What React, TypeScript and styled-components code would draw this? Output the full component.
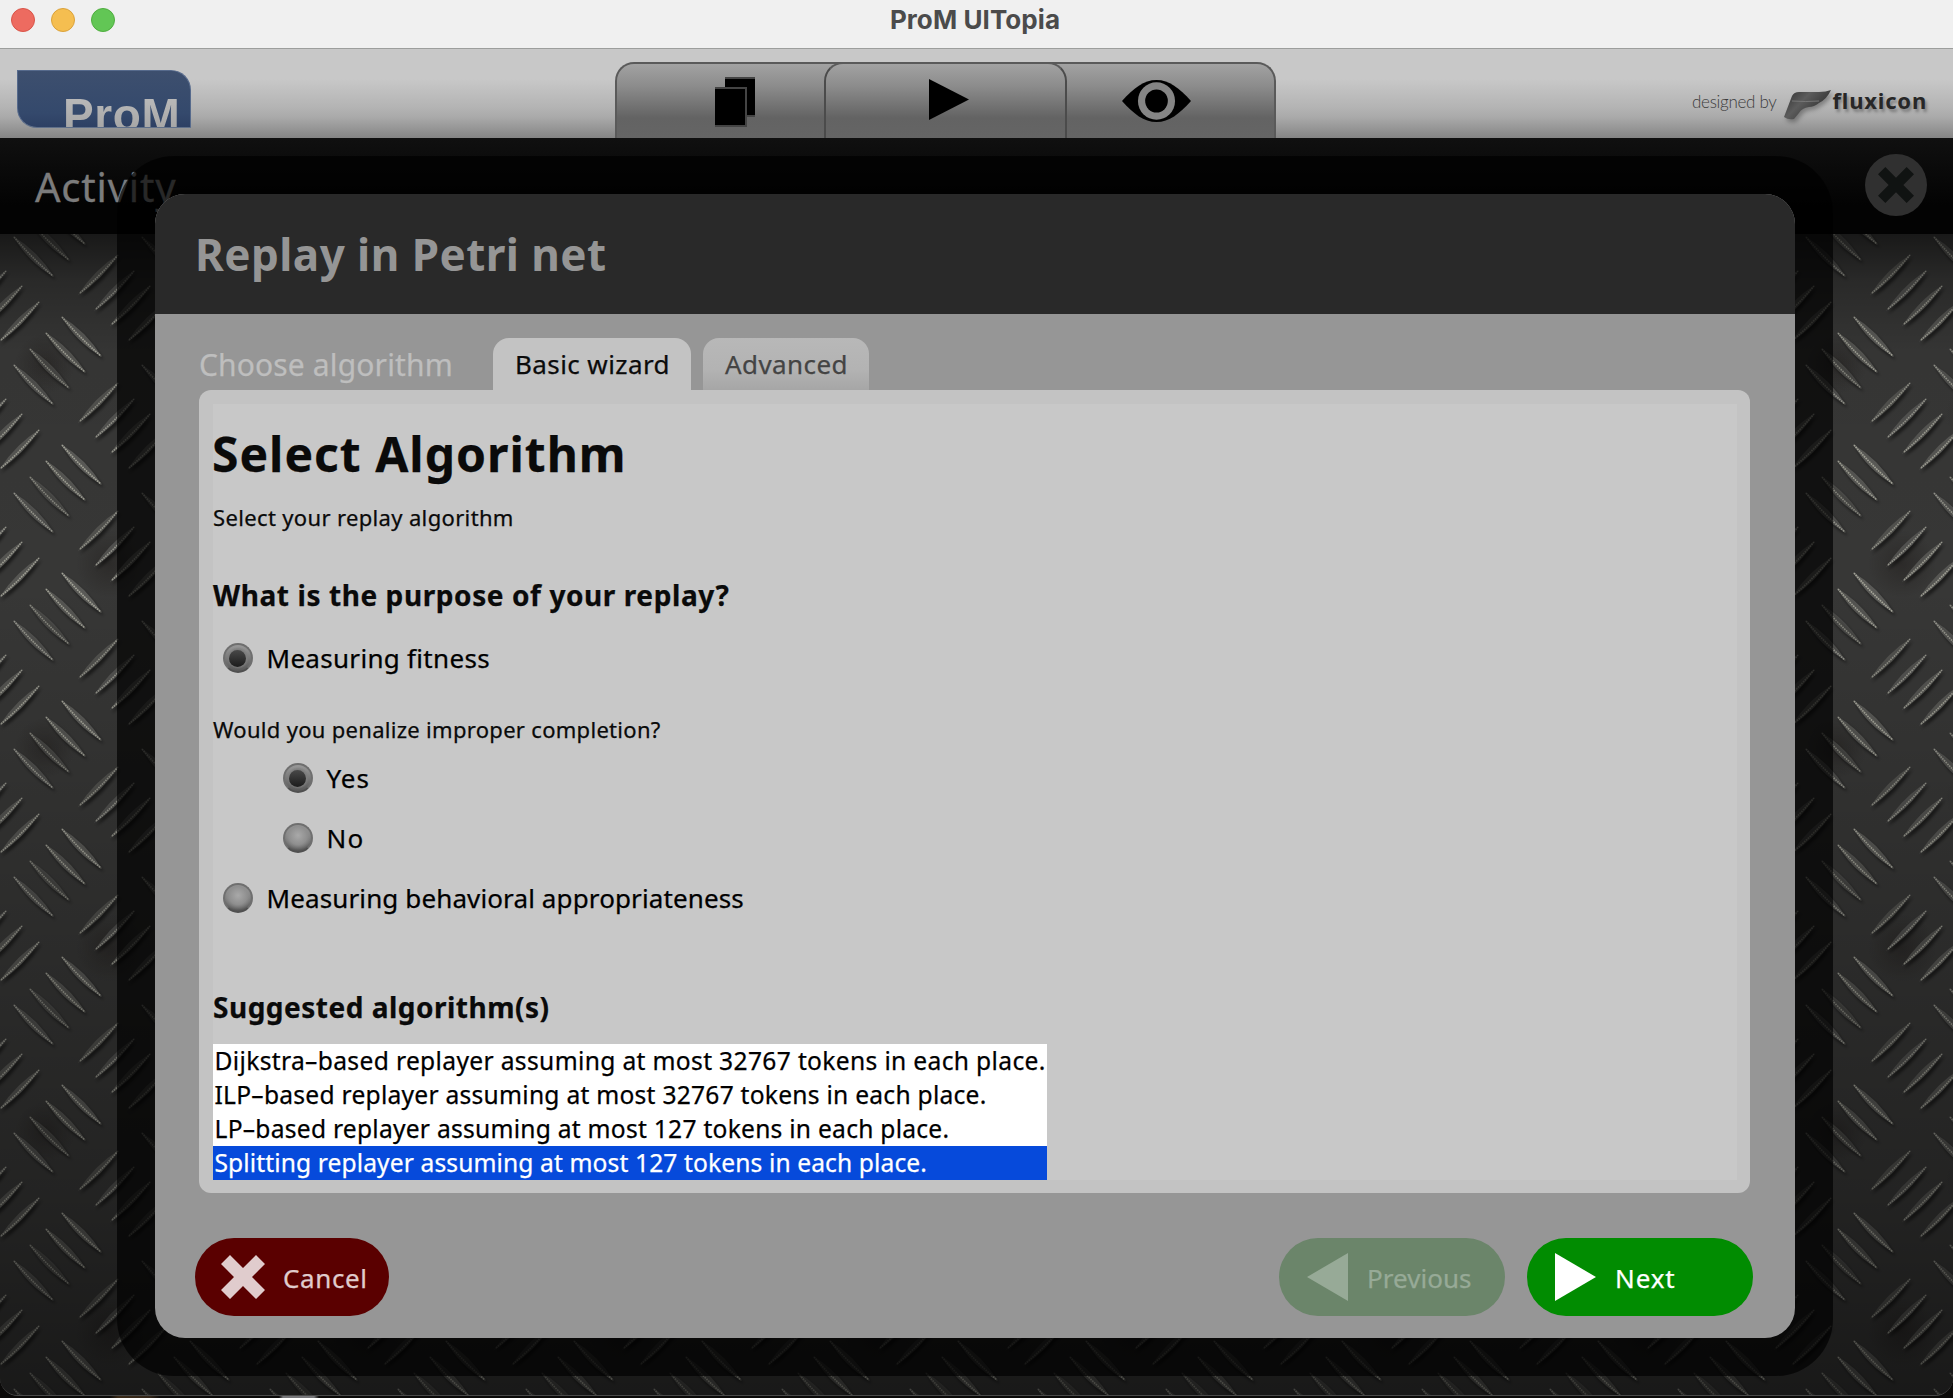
import React from "react";
import styled, { createGlobalStyle, css } from "styled-components";

const GlobalStyle = createGlobalStyle`
  * { box-sizing: border-box; }
  html, body { margin: 0; padding: 0; background: #0a0908; overflow: hidden; }
  body { font-family: "Noto Sans", "Open Sans", sans-serif; }
  h1, h2, p, ul { margin: 0; padding: 0; }
  button { font-family: inherit; }
`;

const Desktop = styled.div`
  width: 1953px;
  height: 1398px;
  overflow: hidden;
  background: linear-gradient(90deg, #0b0a09 110px, #3a2a18 118px, #33261a 150px, #0b0a09 160px, #0b0a09 279px, #77777a 283px, #77777a 314px, #0b0a09 319px);
`;

const Window = styled.div`
  position: relative;
  display: flex;
  flex-direction: column;
  height: 1396px;
  overflow: hidden;
  border-radius: 0 0 18px 18px;
  border-bottom: 1px solid #4a4a4a;
  background: #1b1b1b;
`;

const TitleBar = styled.header`
  display: grid;
  grid-template-columns: 1fr auto 1fr;
  align-items: center;
  flex: none;
  height: 49px;
  padding: 0 13px 9px 11px;
  background: #f0f0f0;
  border-bottom: 1px solid #9c9e9c;
`;

const Lights = styled.div`
  display: flex;
  gap: 16px;
`;

const Light = styled.span<{ $fill: string; $edge: string }>`
  width: 24px;
  height: 24px;
  border-radius: 50%;
  background: ${(p) => p.$fill};
  border: 1px solid ${(p) => p.$edge};
`;

const WindowTitle = styled.div`
  font: 700 26px/38px Inter, sans-serif;
  letter-spacing: 0.08px;
  color: #4b4b4b;
  margin-left: -1px;
`;

const Toolbar = styled.nav`
  display: grid;
  grid-template-columns: 615px 661px 1fr;
  flex: none;
  height: 89px;
  background: linear-gradient(#c8c8c8 0, #c8c8c8 30px, #b4b4b4 58px, #aaaaaa 68px, #959595 80px, #858585 100%);
`;

const Logo = styled.div`
  width: 174px;
  height: 58px;
  margin: 21px 0 0 17px;
  padding-left: 45px;
  overflow: hidden;
  border-radius: 0 20px 0 20px;
  border: 1px solid #566a8c;
  border-bottom-color: #60708a;
  background: linear-gradient(#3d4f6e, #34496c 75%, #2d4064);
  font: 700 46px/50px "Liberation Sans", Arial, sans-serif;
  letter-spacing: 0.6px;
`;

const LogoText = styled.div`
  margin-top: 19px;
  background: linear-gradient(#b8b8b8 10px, #a4a4a4 42px);
  background-clip: text;
  -webkit-background-clip: text;
  color: transparent;
`;

const ViewTabs = styled.div`
  display: grid;
  grid-template-columns: 207px 243px 1fr;
  height: 76px;
  margin-top: 13px;
  border: 2px solid #5a5a5a;
  border-bottom: 0;
  border-radius: 19px 19px 0 0;
  background: linear-gradient(#a2a2a2, #8c8c8c 22px, #636363 54px, #656565);
`;

const ViewTab = styled.button<{ $middle?: boolean }>`
  display: flex;
  align-items: flex-start;
  justify-content: center;
  padding: 0;
  border: 0;
  background: none;
  ${(p) =>
    p.$middle &&
    css`
      margin-top: -2px;
      border: 2px solid #4b4b4b;
      border-top-color: #5a5a5a;
      border-bottom: 0;
      border-radius: 19px 19px 0 0;
    `}
`;

const ViewGlyph = styled.span<{ $top: number; $before?: number; $after?: number }>`
  display: flex;
  margin-top: ${(p) => p.$top}px;
  margin-left: ${(p) => p.$before ?? 0}px;
  margin-right: ${(p) => p.$after ?? 0}px;
`;

const Credit = styled.div`
  display: flex;
  align-items: flex-start;
  justify-content: flex-end;
  padding: 35px 26px 0 0;
`;

const CreditText = styled.span`
  font: 300 17px/34px Lato, sans-serif;
  color: #3c3c3c;
  letter-spacing: -0.3px;
  margin: 1px 6px 0 0;
`;

const FluxMark = styled.svg`
  width: 50px;
  height: 36px;
  margin-top: 3px;
  filter: drop-shadow(2px 3px 2px rgba(0, 0, 0, 0.3));
`;

const FluxName = styled.span`
  font-weight: 700;
  font-size: 22px;
  line-height: 32px;
  letter-spacing: 0.8px;
  color: #272727;
  text-shadow: 2px 3px 3px rgba(0, 0, 0, 0.3);
`;

const ActivityBar = styled.div`
  display: flex;
  flex: none;
  align-items: center;
  justify-content: space-between;
  height: 96px;
  padding: 0 26px 0 35px;
  background: linear-gradient(#101010, #030303 70%);
`;

const ActivityTitle = styled.h1`
  padding-top: 2px;
  font-weight: 400;
  font-size: 40px;
  line-height: 94px;
  letter-spacing: 0.8px;
  color: #7c7c7c;
  -webkit-text-stroke: 0.3px;
`;

const CloseButton = styled.button`
  display: flex;
  align-items: center;
  justify-content: center;
  width: 62px;
  height: 62px;
  margin-top: -2px;
  padding: 0;
  border: 0;
  border-radius: 50%;
  background: #303030;
`;

const Workspace = styled.main`
  flex: 1;
  min-height: 0;
  background: #353534;
`;

const Plate = styled.svg`
  display: block;
  width: 1953px;
  height: 1164px;
`;

const ModalFrame = styled.div`
  position: absolute;
  top: 156px;
  left: 117px;
  display: flex;
  width: 1716px;
  height: 1220px;
  padding: 38px;
  border-radius: 57px;
  background: rgba(0, 0, 0, 0.68);
`;

const Dialog = styled.section`
  display: flex;
  flex: 1;
  flex-direction: column;
  overflow: hidden;
  border-radius: 30px;
  background: #969696;
`;

const DialogHeader = styled.header`
  flex: none;
  height: 120px;
  padding: 2px 0 0 40px;
  background: #292929;
`;

const DialogTitle = styled.h2`
  font-weight: 700;
  font-size: 44px;
  line-height: 116px;
  letter-spacing: 0.45px;
  color: #959595;
`;

const DialogBody = styled.div`
  display: flex;
  flex: 1;
  flex-direction: column;
  padding: 24px 45px 22px 44px;
  -webkit-text-stroke: 0.25px;
`;

const TabRow = styled.div`
  display: flex;
  height: 52px;
`;

const TabCaption = styled.div`
  width: 294px;
  padding-top: 1px;
  font-size: 30px;
  line-height: 52px;
  letter-spacing: 0.14px;
  color: #bebebe;
`;

const Tab = styled.button<{ $active?: boolean; $width: number }>`
  width: ${(p) => p.$width}px;
  margin-right: 12px;
  padding: 0 0 0 1px;
  border: 0;
  border-radius: 16px 16px 0 0;
  font-size: 26px;
  line-height: 52px;
  letter-spacing: 0.4px;
  -webkit-text-stroke: 0.25px;
  color: ${(p) => (p.$active ? "#0b0b0b" : "#444444")};
  background: ${(p) => (p.$active ? "#c3c3c3" : "linear-gradient(#b8b8b8, #b3b3b3 60%, #a6a6a6)")};
`;

const Panel = styled.div`
  height: 803px;
  padding: 14px 13px 13px 14px;
  border-radius: 12px;
  background: #c3c3c3;
`;

const PanelInner = styled.div`
  height: 776px;
  background: #c8c8c8;
  color: #0a0a0a;
`;

const Heading = styled.h1`
  padding-top: 2px;
  font-size: 48px;
  line-height: 96px;
  letter-spacing: 1px;
  margin-left: -1px;
`;

const SubHeading = styled.h2<{ $gap: number; $spacing: number }>`
  margin-top: ${(p) => p.$gap}px;
  font-size: 28px;
  line-height: 66px;
  letter-spacing: ${(p) => p.$spacing}px;
`;

const Note = styled.p<{ $gap?: number; $height: number; $spacing: number }>`
  margin-top: ${(p) => p.$gap ?? 0}px;
  font-size: 22px;
  line-height: ${(p) => p.$height}px;
  letter-spacing: ${(p) => p.$spacing}px;
`;

const RadioRow = styled.label<{ $nested?: boolean; $spacing: number }>`
  display: flex;
  align-items: center;
  gap: 14px;
  height: 60px;
  padding-left: ${(p) => (p.$nested ? 69.5 : 9.5)}px;
  font-size: 26px;
  line-height: 60px;
  letter-spacing: ${(p) => p.$spacing}px;
  color: #000;
`;

const RadioDot = styled.span<{ $on?: boolean }>`
  display: flex;
  align-items: center;
  justify-content: center;
  width: 30px;
  height: 30px;
  border-radius: 50%;
  border: 2px solid #6f6f6f;
  border-bottom-color: #505050;
  background: ${(p) =>
    p.$on
      ? "radial-gradient(circle at 50% 50%, #7d7d7d 45%, transparent 60%), linear-gradient(#999, #585858)"
      : "radial-gradient(circle at 50% 40%, #a9a9a9 0, #8f8f8f 45%, transparent 72%), linear-gradient(#9a9a9a, #555)"};

  &::after {
    content: "";
    display: ${(p) => (p.$on ? "block" : "none")};
    width: 17px;
    height: 17px;
    border-radius: 50%;
    background: linear-gradient(#484848, #1c1c1c);
  }
`;

const List = styled.ul`
  width: 834px;
  margin-top: 4px;
  list-style: none;
  background: #fff;
`;

const ListItem = styled.li<{ $selected?: boolean; $spacing: number }>`
  height: 34px;
  padding-left: 1.5px;
  white-space: nowrap;
  font-size: 24.6px;
  line-height: 34px;
  letter-spacing: ${(p) => p.$spacing}px;
  color: ${(p) => (p.$selected ? "#fff" : "#000")};
  background: ${(p) => (p.$selected ? "#064adb" : "transparent")};
`;

const Footer = styled.footer`
  display: flex;
  align-items: center;
  gap: 22px;
  margin: 45px -3px 0 -4px;
`;

const Spacer = styled.div`
  flex: 1;
`;

const tones = {
  cancel: css`
    width: 194px;
    padding-left: 26px;
    gap: 18px;
    letter-spacing: 0.6px;
    background: #5a0000;
    color: #e0cccd;
  `,
  previous: css`
    width: 226px;
    padding-left: 28px;
    gap: 19px;
    letter-spacing: 0.03px;
    background: #6b856a;
    color: #97aa97;
  `,
  next: css`
    width: 226px;
    padding-left: 28px;
    gap: 19px;
    letter-spacing: 0.9px;
    background: #018c01;
    color: #fff;
  `,
};

const PillButton = styled.button<{ $tone: keyof typeof tones }>`
  display: flex;
  align-items: center;
  height: 78px;
  padding: 0;
  border: 0;
  border-radius: 39px;
  font-size: 26px;
  line-height: 76px;
  -webkit-text-stroke: 0.25px;
  ${(p) => tones[p.$tone]}
`;

const PillLabel = styled.span`
  padding-top: 1px;
`;

const FolderIcon = () => (
  <svg width="44" height="52" viewBox="0 0 44 52">
    <path d="M12 2h30v38h-8V10H12z" />
    <path d="M12 0h30v2H12zM34 38h8v2h-8z" fill="#444" />
    <path d="M2 10h32v40H2z" fill="#444" />
    <path d="M2 12h30v36H2z" />
  </svg>
);

const PlayIcon = () => (
  <svg width="40" height="42" viewBox="0 0 40 42">
    <path d="M0 0L40 20.5L0 41z" />
  </svg>
);

const EyeIcon = () => (
  <svg width="69" height="42" viewBox="0 0 70 42" preserveAspectRatio="none">
    <path d="M0 21C12 8 22 0 35 0S58 8 70 21C58 34 48 42 35 42S12 34 0 21z" />
    <circle cx="35" cy="21" r="18.8" fill="#858585" />
    <circle cx="35" cy="21" r="11.5" />
  </svg>
);

const CrossIcon = ({ size, color }: { size: number; color: string }) => (
  <svg width={size} height={size} viewBox="0 0 44 44">
    <path
      d="M9 0L22 13L35 0L44 9L31 22L44 35L35 44L22 31L9 44L0 35L13 22L0 9z"
      fill={color}
    />
  </svg>
);

const Arrow = ({ left, color }: { left?: boolean; color: string }) => (
  <svg width="41" height="48" viewBox="0 0 41 48">
    <path d={left ? "M41 0L0 24L41 48z" : "M0 0L41 24L0 48z"} fill={color} />
  </svg>
);

const TILE = 128;

type Ridge = { x: number; y: number; up: boolean; tone: number };

const ridges: Ridge[] = [
  { x: 13, y: 2, up: false, tone: 0.8 },
  { x: 61, y: 82, up: false, tone: 1 },
  { x: 45, y: 98, up: false, tone: 0.9 },
  { x: 29, y: 114, up: false, tone: 0.65 },
  { x: 78, y: 61, up: true, tone: 0.75 },
  { x: 94, y: 77, up: true, tone: 0.8 },
  { x: 110, y: 92, up: true, tone: 0.85 },
  { x: 127, y: 108, up: true, tone: 0.9 },
];

const RidgeShape = ({ x, y, up, tone }: Ridge) => {
  const body = up ? "M0 0Q17 -26 41 -41Q24 -15 0 0z" : "M0 0Q25 15 41 41Q15 26 0 0z";
  const shine = up ? "M2 -2Q22 -19 40 -40" : "M1 1Q19 22 40 40";
  return (
    <g transform={`translate(${x} ${y})`}>
      <path d={body} fill="#000" opacity="0.5" transform="translate(2 3)" filter="url(#soft)" />
      <path d={body} fill="#5a5a57" opacity={tone} />
      <path d={shine} fill="none" stroke="#a8a89c" strokeWidth="1.7" strokeDasharray="1.6 0.9" opacity={tone * 0.95} />
    </g>
  );
};

const SteelPlate = () => (
  <Plate viewBox="0 0 1953 1164">
    <defs>
      <filter id="soft" x="-30%" y="-30%" width="160%" height="160%">
        <feGaussianBlur stdDeviation="1.5" />
      </filter>
      <radialGradient id="smudge">
        <stop offset="0" stopColor="#1c1816" stopOpacity="0.4" />
        <stop offset="1" stopColor="#1c1816" stopOpacity="0" />
      </radialGradient>
      <linearGradient id="fade" x1="0" y1="0" x2="0" y2="1">
        <stop offset="0" stopColor="#000" stopOpacity="0.55" />
        <stop offset="0.04" stopColor="#000" stopOpacity="0.25" />
        <stop offset="0.1" stopColor="#000" stopOpacity="0.04" />
        <stop offset="0.3" stopColor="#000" stopOpacity="0" />
        <stop offset="0.82" stopColor="#000" stopOpacity="0.36" />
        <stop offset="1" stopColor="#000" stopOpacity="0.55" />
      </linearGradient>
      <pattern id="tread" width={TILE} height={TILE} patternUnits="userSpaceOnUse">
        {[-TILE, 0, TILE].map((dx) =>
          [-TILE, 0, TILE].map((dy) => (
            <g key={`${dx},${dy}`} transform={`translate(${dx} ${dy})`}>
              {ridges.map((r) => (
                <RidgeShape key={`${r.x}-${r.y}`} {...r} />
              ))}
            </g>
          ))
        )}
      </pattern>
      <pattern id="wear" width="256" height="384" patternUnits="userSpaceOnUse">
        <circle cx="45" cy="130" r="30" fill="url(#smudge)" />
        <circle cx="190" cy="180" r="36" fill="url(#smudge)" />
        <circle cx="110" cy="330" r="34" fill="url(#smudge)" />
      </pattern>
    </defs>
    <rect width="1953" height="1164" fill="#373736" />
    <rect width="1953" height="1164" fill="url(#wear)" />
    <rect width="1953" height="1164" fill="url(#tread)" />
    <rect width="1953" height="1164" fill="url(#fade)" />
  </Plate>
);

const algorithms = [
  { label: "Dijkstra–based replayer assuming at most 32767 tokens in each place.", spacing: 0.34 },
  { label: "ILP–based replayer assuming at most 32767 tokens in each place.", spacing: 0.25 },
  { label: "LP–based replayer assuming at most 127 tokens in each place.", spacing: 0.25 },
  { label: "Splitting replayer assuming at most 127 tokens in each place.", spacing: 0.11, selected: true },
];

export default function App() {
  return (
    <Desktop>
      <GlobalStyle />
      <Window>
        <TitleBar>
          <Lights>
            <Light $fill="#ed6b60" $edge="#d95448" />
            <Light $fill="#f5be50" $edge="#dba23a" />
            <Light $fill="#62c655" $edge="#4fae3f" />
          </Lights>
          <WindowTitle>ProM UITopia</WindowTitle>
        </TitleBar>

        <Toolbar>
          <Logo>
            <LogoText>ProM</LogoText>
          </Logo>
          <ViewTabs>
            <ViewTab aria-label="Workspace">
              <ViewGlyph $top={13} $before={29}>
                <FolderIcon />
              </ViewGlyph>
            </ViewTab>
            <ViewTab $middle aria-label="Actions">
              <ViewGlyph $top={15} $before={6}>
                <PlayIcon />
              </ViewGlyph>
            </ViewTab>
            <ViewTab aria-label="Views">
              <ViewGlyph $top={16} $after={29}>
                <EyeIcon />
              </ViewGlyph>
            </ViewTab>
          </ViewTabs>
          <Credit>
            <CreditText>designed by</CreditText>
            <FluxMark viewBox="0 0 50 36">
              <defs>
                <linearGradient id="flux" x1="0" y1="0" x2="1" y2="0.6">
                  <stop offset="0" stopColor="#2c2c2c" />
                  <stop offset="0.45" stopColor="#5c5c5c" />
                  <stop offset="1" stopColor="#2b2b2b" />
                </linearGradient>
              </defs>
              <path d="M1 30L9 9Q11 5 16 5L36 5Q43 5 48 3Q44 12 36 16Q31 20 26 20Q19 21 16 26L11 32Q5 33 1 30z" fill="url(#flux)" />
              <path d="M9 14Q22 15 36 14" fill="none" stroke="#777" strokeWidth="1" />
            </FluxMark>
            <FluxName>fluxicon</FluxName>
          </Credit>
        </Toolbar>

        <ActivityBar>
          <ActivityTitle>Activity</ActivityTitle>
          <CloseButton aria-label="Close">
            <CrossIcon size={36} color="#101312" />
          </CloseButton>
        </ActivityBar>

        <Workspace>
          <SteelPlate />
        </Workspace>

        <ModalFrame>
          <Dialog>
            <DialogHeader>
              <DialogTitle>Replay in Petri net</DialogTitle>
            </DialogHeader>
            <DialogBody>
              <TabRow>
                <TabCaption>Choose algorithm</TabCaption>
                <Tab $active $width={198}>
                  Basic wizard
                </Tab>
                <Tab $width={166}>Advanced</Tab>
              </TabRow>
              <Panel>
                <PanelInner>
                  <Heading>Select Algorithm</Heading>
                  <Note $height={31} $spacing={0.35}>
                    Select your replay algorithm
                  </Note>
                  <SubHeading $gap={29} $spacing={0.59}>
                    What is the purpose of your replay?
                  </SubHeading>
                  <RadioRow $spacing={0.3}>
                    <RadioDot $on />
                    Measuring fitness
                  </RadioRow>
                  <Note $gap={23} $height={37} $spacing={0.3}>
                    Would you penalize improper completion?
                  </Note>
                  <RadioRow $nested $spacing={0.9}>
                    <RadioDot $on />
                    Yes
                  </RadioRow>
                  <RadioRow $nested $spacing={1.2}>
                    <RadioDot />
                    No
                  </RadioRow>
                  <RadioRow $spacing={0.12}>
                    <RadioDot />
                    Measuring behavioral appropriateness
                  </RadioRow>
                  <SubHeading $gap={46} $spacing={0.5}>
                    Suggested algorithm(s)
                  </SubHeading>
                  <List>
                    {algorithms.map((a) => (
                      <ListItem key={a.label} $selected={a.selected} $spacing={a.spacing}>
                        {a.label}
                      </ListItem>
                    ))}
                  </List>
                </PanelInner>
              </Panel>
              <Footer>
                <PillButton $tone="cancel">
                  <CrossIcon size={44} color="#e0cccd" />
                  <PillLabel>Cancel</PillLabel>
                </PillButton>
                <Spacer />
                <PillButton $tone="previous">
                  <Arrow left color="#97aa97" />
                  <PillLabel>Previous</PillLabel>
                </PillButton>
                <PillButton $tone="next">
                  <Arrow color="#fff" />
                  <PillLabel>Next</PillLabel>
                </PillButton>
              </Footer>
            </DialogBody>
          </Dialog>
        </ModalFrame>
      </Window>
    </Desktop>
  );
}
